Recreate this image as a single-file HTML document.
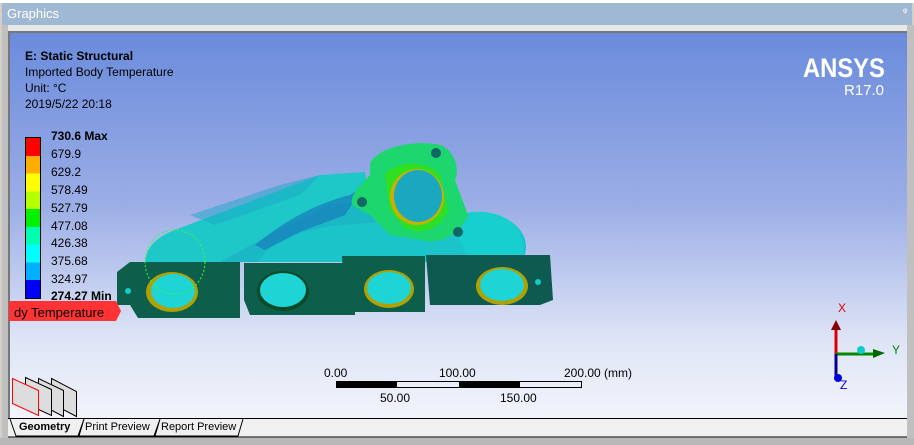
<!DOCTYPE html>
<html><head><style>
body{margin:0;width:914px;height:445px;overflow:hidden;background:#d4d0c8;font-family:"Liberation Sans",sans-serif;position:relative}
.t{position:absolute;white-space:nowrap;font-size:12px;color:#000}
</style></head><body>
<div style="position:absolute;left:0;top:0;width:914px;height:3px;background:#fff"></div>
<div style="position:absolute;left:2px;top:3px;width:910px;height:22px;background:#9fb9d3"></div>
<div class="t" style="left:7px;top:6px;font-size:13px;color:#fff">Graphics</div>
<div class="t" style="left:903px;top:7px;font-size:10px;color:#fff">ᵠ</div>
<div style="position:absolute;left:2px;top:25px;width:910px;height:7px;background:#e8e8e8"></div>
<div style="position:absolute;left:2px;top:25px;width:6px;height:420px;background:#c0c0c0"></div>
<div style="position:absolute;left:907px;top:25px;width:7px;height:420px;background:#c0c0c0"></div>
<div style="position:absolute;left:8px;top:31px;width:899px;height:387px;border-top:2px solid #777;border-left:2px solid #777;box-sizing:border-box;background:linear-gradient(#6a8bdc 0%,#9caee6 45%,#dfe5f6 80%,#f2f4fb 100%)"></div>
<div class="t" style="left:25px;top:49px;font-weight:bold">E: Static Structural</div>
<div class="t" style="left:25px;top:65px">Imported Body Temperature</div>
<div class="t" style="left:25px;top:81px">Unit: °C</div>
<div class="t" style="left:25px;top:97px">2019/5/22 20:18</div>
<div style="position:absolute;left:803px;top:53px;font-size:27px;color:#fff;font-weight:bold;transform:scaleX(0.88);transform-origin:left">ANSYS</div>
<div style="position:absolute;left:844px;top:82px;font-size:15px;color:#fff">R17.0</div>
<div style="position:absolute;left:25px;top:137px;width:16px;height:162px;border:1px solid #000;box-sizing:border-box;background:linear-gradient(#f00 0 11.1%,#ffad00 11.1% 22.2%,#ff0 22.2% 33.3%,#b4ff00 33.3% 44.4%,#00f000 44.4% 55.5%,#00ffb0 55.5% 66.6%,#0ff 66.6% 77.7%,#00b0ff 77.7% 88.8%,#0000f5 88.8%)"></div>
<div class="t" style="left:51px;top:129px;font-weight:bold">730.6 Max</div>
<div class="t" style="left:51px;top:147px">679.9</div>
<div class="t" style="left:51px;top:165px">629.2</div>
<div class="t" style="left:51px;top:183px">578.49</div>
<div class="t" style="left:51px;top:201px">527.79</div>
<div class="t" style="left:51px;top:219px">477.08</div>
<div class="t" style="left:51px;top:236px">426.38</div>
<div class="t" style="left:51px;top:254px">375.68</div>
<div class="t" style="left:51px;top:272px">324.97</div>
<div class="t" style="left:51px;top:289px;font-weight:bold">274.27 Min</div>
<svg width="914" height="445" style="position:absolute;left:0;top:0">
<path d="M145 265 C145 245 160 235 180 228 L320 175 L365 172 L368 198 L300 225 L250 250 L235 265Z" fill="#1ec8c8"/>
<path d="M220 262 L260 240 L330 205 L370 200 L380 225 L300 240 L260 262Z" fill="#1ab8c4"/>
<path d="M258 262 C270 240 300 230 340 225 L380 222 L400 232 L450 218 C480 212 510 215 520 230 C528 240 528 255 520 262Z" fill="#1bc4c8"/>
<path d="M450 218 C480 205 505 215 515 225 C525 240 525 255 520 262 L470 262Z" fill="#18cfd0"/>
<path d="M255 245 C280 225 310 205 350 195 L365 185 L345 215 L300 232 L265 250Z" fill="#1780bc" opacity=".75"/>
<path d="M190 215 L280 185 L320 175 L300 195 L215 225Z" fill="#1aa8c8" opacity=".5"/>
<path d="M370 163 C380 145 420 140 440 145 C455 150 460 170 455 180 L468 215 C460 235 440 245 420 240 L390 235 L370 215 L352 205 C350 195 360 185 370 175Z" fill="#1ed66e"/>
<path d="M385 175 C395 160 430 160 440 175 L448 210 C440 230 420 235 405 228 L390 210Z" fill="#2ee020"/>
<ellipse cx="417" cy="197" rx="27" ry="28" fill="#c8b000"/>
<ellipse cx="418" cy="196" rx="24" ry="26" fill="#1aa8c0"/>
<circle cx="436" cy="153" r="5" fill="#166"/><circle cx="362" cy="202" r="5" fill="#166"/><circle cx="458" cy="232" r="5" fill="#166"/>
<path d="M117 272 L130 262 L240 262 L240 318 L138 318 L130 305 L117 305Z" fill="#0d5f4c"/>
<path d="M244 263 L355 263 L355 315 L250 315 L244 300Z" fill="#0d5f4c"/>
<path d="M342 256 L425 256 L425 312 L345 312Z" fill="#0d5f4c"/>
<path d="M426 255 L550 255 L553 300 L540 305 L430 305Z" fill="#0e5a50"/>
<ellipse cx="172" cy="292" rx="26" ry="20" fill="#b0a000"/><ellipse cx="173" cy="291" rx="22" ry="17" fill="#1ed4d4"/>
<ellipse cx="283" cy="291" rx="26" ry="20" fill="#0a4a2a"/><ellipse cx="283" cy="290" rx="23" ry="17" fill="#1ed4d4"/>
<ellipse cx="389" cy="289" rx="25" ry="19" fill="#b0a000"/><ellipse cx="389" cy="288" rx="22" ry="16" fill="#1ed4d4"/>
<ellipse cx="502" cy="286" rx="26" ry="19" fill="#b0a000"/><ellipse cx="502" cy="285" rx="22" ry="16" fill="#1ed4d4"/>
<circle cx="128" cy="291" r="3" fill="#1cc"/><circle cx="538" cy="282" r="3" fill="#1cc"/>
<ellipse cx="175" cy="262" rx="30" ry="32" fill="none" stroke="#3f3" stroke-dasharray="2 2"/>
<path d="M9 301 L116 301 L121 311 L116 321 L9 321Z" fill="#f33"/>
<path d="M336 381h61v7h-61zM459 381h61v7h-61z" fill="#000"/>
<rect x="336.5" y="381.5" width="245" height="6" fill="none" stroke="#000"/>
<line x1="836" y1="354" x2="836" y2="325" stroke="#d00" stroke-width="3"/><path d="M831 330 L836 320 L841 330Z" fill="#800"/>
<line x1="836" y1="354" x2="876" y2="354" stroke="#080" stroke-width="3"/><path d="M873 349 L885 353 L873 358Z" fill="#060"/>
<line x1="836" y1="354" x2="836" y2="378" stroke="#008" stroke-width="3"/><circle cx="838" cy="378" r="4" fill="#00d"/>
<circle cx="861" cy="350" r="4" fill="#1cc"/>
<path d="M51.5 378.5 L76.5 391.5 L76.5 416.5 L51.5 403.5Z" fill="#ddd" stroke="#000"/>
<path d="M38.5 378.5 L63.5 390.5 L63.5 416.5 L38.5 403.5Z" fill="#ddd" stroke="#000"/>
<path d="M25.5 377.5 L51.5 389.5 L51.5 415.5 L25.5 403.5Z" fill="#ddd" stroke="#000"/>
<path d="M12.5 378.5 L38.5 390.5 L38.5 415.5 L12.5 403.5Z" fill="#ddd" stroke="#f00"/>
<text x="838" y="312" fill="#d00" font-size="12" font-family="Liberation Sans">X</text>
<text x="892" y="354" fill="#080" font-size="12" font-family="Liberation Sans">Y</text>
<text x="840" y="389" fill="#00d" font-size="12" font-family="Liberation Sans">Z</text>
</svg>
<div class="t" style="left:14px;top:305px;font-size:13px">dy Temperature</div>
<div class="t" style="left:324px;top:366px">0.00</div>
<div class="t" style="left:439px;top:366px">100.00</div>
<div class="t" style="left:564px;top:366px">200.00 (mm)</div>
<div class="t" style="left:380px;top:391px">50.00</div>
<div class="t" style="left:500px;top:391px">150.00</div>
<div style="position:absolute;left:8px;top:418px;width:899px;height:19px;background:#f0f0f0;border-top:1px solid #000;box-sizing:border-box"></div>
<svg width="914" height="445" style="position:absolute;left:0;top:0">
<path d="M10 419 L16 436 L79 436 L84 419 M84 419 L78 436 L155 436 L160 419 M160 419 L154 436 L238 436 L243 419" fill="none" stroke="#000"/>
<line x1="8" y1="437" x2="907" y2="437" stroke="#000"/>
</svg>
<div class="t" style="left:19px;top:421px;font-size:11px;font-weight:bold">Geometry</div>
<div class="t" style="left:85px;top:421px;font-size:11px">Print Preview</div>
<div class="t" style="left:161px;top:421px;font-size:11px">Report Preview</div>
<div style="position:absolute;left:0;top:438px;width:914px;height:7px;background:#b8b8b8"></div>
</body></html>
